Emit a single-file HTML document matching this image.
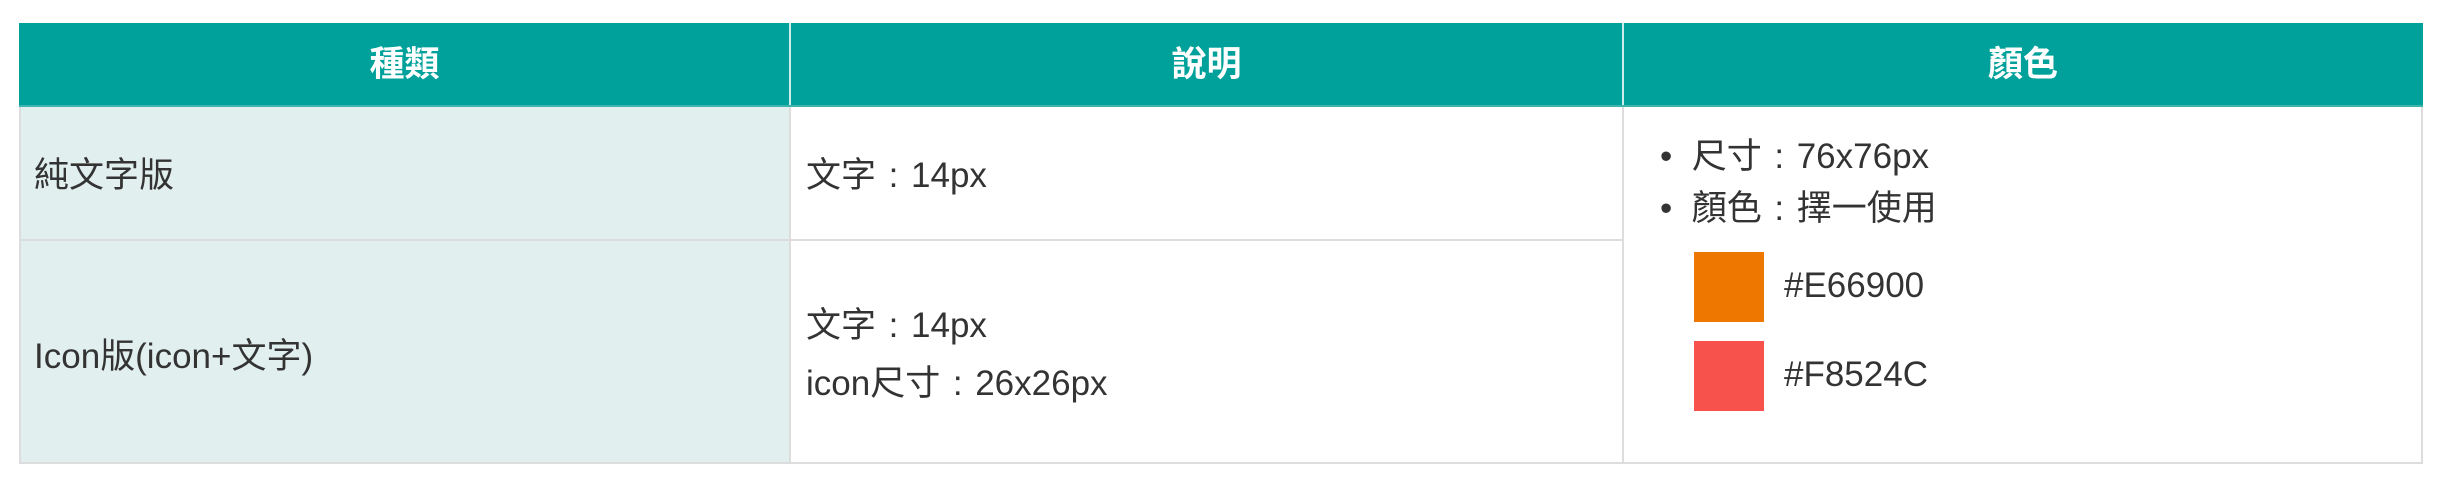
<!DOCTYPE html>
<html><head><meta charset="utf-8"><style>
body{margin:0;width:2443px;height:489px;background:#fff;position:relative;overflow:hidden;font-family:"Liberation Sans","Noto Sans CJK TC",sans-serif;color:#333;}
.a{position:absolute;box-sizing:border-box;}
.t{position:absolute;font-size:35px;white-space:nowrap;line-height:58px;}
.h{color:#fff;font-weight:bold;text-align:center;}
.c{display:inline-block;width:1em;text-align:center;}
</style></head><body>
<div class="a" style="left:19px;top:23px;width:2404px;height:441px;border:2px solid #ddd;"></div>
<div class="a" style="left:19px;top:23px;width:2404px;height:84px;background:#00A19A;"></div>
<div class="a" style="left:19px;top:107px;width:771px;height:357px;background:#E1EFEE;border-left:2px solid #ddd;border-bottom:2px solid #ddd;"></div>
<div class="a" style="left:789px;top:23px;width:2px;height:441px;background:#ddd;"></div>
<div class="a" style="left:789px;top:23px;width:2px;height:84px;background:#cdecea;"></div>
<div class="a" style="left:1622px;top:23px;width:2px;height:441px;background:#ddd;"></div>
<div class="a" style="left:1622px;top:23px;width:2px;height:84px;background:#cdecea;"></div>
<div class="a" style="left:19px;top:239px;width:1604px;height:2px;background:#ddd;"></div>
<div class="a" style="left:19px;top:105px;width:2404px;height:2px;background:#3db5ae;"></div>

<div class="t h" style="left:19px;width:771px;top:36px;">種類</div>
<div class="t h" style="left:790px;width:833px;top:36px;">說明</div>
<div class="t h" style="left:1623px;width:800px;top:36px;">顏色</div>

<div class="t" style="left:34px;top:147px;">純文字版</div>
<div class="t" style="left:34px;top:328px;">Icon版(icon+文字)</div>
<div class="t" style="left:806px;top:147px;">文字<span class="c">:</span>14px</div>
<div class="t" style="left:806px;top:297px;">文字<span class="c">:</span>14px<br>icon尺寸<span class="c">:</span>26x26px</div>

<div class="t" style="left:1660px;top:128px;">•&nbsp;&nbsp;尺寸<span class="c">:</span>76x76px</div>
<div class="t" style="left:1660px;top:180px;">•&nbsp;&nbsp;顏色<span class="c">:</span>擇一使用</div>
<div class="a" style="left:1694px;top:252px;width:70px;height:70px;background:#EE7700;"></div>
<div class="a" style="left:1694px;top:341px;width:70px;height:70px;background:#F8524C;"></div>
<div class="t" style="left:1784px;top:257px;">#E66900</div>
<div class="t" style="left:1784px;top:346px;">#F8524C</div>
</body></html>
